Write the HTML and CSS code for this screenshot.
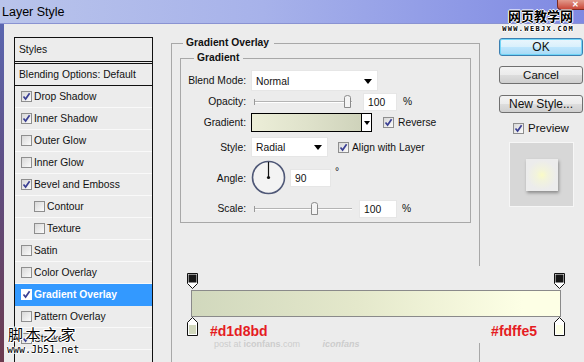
FILE: index.html
```html
<!DOCTYPE html>
<html>
<head>
<meta charset="utf-8">
<link rel="stylesheet" href="styles.css">
</head>
<body>
<div class="titlebar">
  <span class="title">Layer Style</span>
  <div class="close">&#x2715;</div>
</div>
<div class="content">
  <div class="frame"></div>
  <div class="list">
    <div class="hdr">Styles</div>
    <div class="blend">Blending Options: Default</div>
    <div class="item"><span class="cb"><svg viewBox="0 0 9 9"><path d="M1.5 4.5 L3.6 7 L7.6 1.3"/></svg></span>Drop Shadow</div>
    <div class="item"><span class="cb"><svg viewBox="0 0 9 9"><path d="M1.5 4.5 L3.6 7 L7.6 1.3"/></svg></span>Inner Shadow</div>
    <div class="item"><span class="cb"></span>Outer Glow</div>
    <div class="item"><span class="cb"></span>Inner Glow</div>
    <div class="item"><span class="cb"><svg viewBox="0 0 9 9"><path d="M1.5 4.5 L3.6 7 L7.6 1.3"/></svg></span>Bevel and Emboss</div>
    <div class="item sub"><span class="cb"></span>Contour</div>
    <div class="item sub"><span class="cb"></span>Texture</div>
    <div class="item"><span class="cb"></span>Satin</div>
    <div class="item"><span class="cb"></span>Color Overlay</div>
    <div class="item sel"><span class="cb"><svg viewBox="0 0 9 9"><path d="M1.5 4.5 L3.6 7 L7.6 1.3"/></svg></span>Gradient Overlay</div>
    <div class="item"><span class="cb"></span>Pattern Overlay</div>
    <div class="item"><span class="cb"><svg viewBox="0 0 9 9"><path d="M1.5 4.5 L3.6 7 L7.6 1.3"/></svg></span>Stroke</div>
  </div>
  <div class="main">
    <fieldset class="outer">
      <legend>Gradient Overlay</legend>
      <fieldset class="inner">
        <legend>Gradient</legend>
        <div class="form">
          <div class="lbl">Blend Mode:</div>
          <div class="ctl"><div class="select wide"><span>Normal</span><i class="arrow"></i></div></div>

          <div class="lbl">Opacity:</div>
          <div class="ctl">
            <svg class="slider" width="99" height="16" viewBox="0 0 99 16"><line x1="1" y1="7.5" x2="99" y2="7.5" stroke="#b4b4b4"/><line x1="1" y1="8.5" x2="99" y2="8.5" stroke="#fff"/><line x1="1.5" y1="5" x2="1.5" y2="11" stroke="#9a9a9a"/><path d="M91.5 3.5 Q91.5 1.5 94.5 1.5 Q97.5 1.5 97.5 3.5 V13.5 H91.5 Z" fill="#f4f4f4" stroke="#8a8a8a"/></svg>
            <div class="field op">100</div><span class="unit">%</span>
          </div>

          <div class="lbl">Gradient:</div>
          <div class="ctl">
            <div class="swatch"></div><div class="swdrop"><i class="arrow small"></i></div>
            <span class="cb rev"><svg viewBox="0 0 9 9"><path d="M1.5 4.5 L3.6 7 L7.6 1.3"/></svg></span><span>Reverse</span>
          </div>

          <div class="lbl">Style:</div>
          <div class="ctl">
            <div class="select narrow"><span>Radial</span><i class="arrow"></i></div>
            <span class="cb align"><svg viewBox="0 0 9 9"><path d="M1.5 4.5 L3.6 7 L7.6 1.3"/></svg></span><span>Align with Layer</span>
          </div>

          <div class="lbl">Angle:</div>
          <div class="ctl">
            <svg class="dial" width="36" height="36" viewBox="0 0 36 36"><circle cx="17.5" cy="17.5" r="16" fill="#f3f3f3" stroke="#4f5877" stroke-width="1.6"/><line x1="17.5" y1="2" x2="17.5" y2="17.5" stroke="#111" stroke-width="1.2"/><circle cx="17.5" cy="17.5" r="1.6" fill="#111"/></svg>
            <div class="field ang">90</div><span class="deg">&#176;</span>
          </div>

          <div class="lbl">Scale:</div>
          <div class="ctl">
            <svg class="slider" width="99" height="16" viewBox="0 0 99 16"><line x1="1" y1="7.5" x2="99" y2="7.5" stroke="#b4b4b4"/><line x1="1" y1="8.5" x2="99" y2="8.5" stroke="#fff"/><line x1="1.5" y1="5" x2="1.5" y2="11" stroke="#9a9a9a"/><path d="M58.5 3.5 Q58.5 1.5 61.5 1.5 Q64.5 1.5 64.5 3.5 V13.5 H58.5 Z" fill="#f4f4f4" stroke="#8a8a8a"/></svg>
            <div class="field sc">100</div><span class="unit sc">%</span>
          </div>
        </div>
      </fieldset>
    </fieldset>
  </div>
  <div class="side">
    <div class="btn ok">OK</div>
    <div class="btn cancel">Cancel</div>
    <div class="btn newstyle">New Style...</div>
    <div class="prev"><span class="cb"><svg viewBox="0 0 9 9"><path d="M1.5 4.5 L3.6 7 L7.6 1.3"/></svg></span><span>Preview</span></div>
    <div class="thumb"><div class="thumb-in"></div></div>
  </div>
</div>

<div class="editor">
  <div class="stops top">
    <svg width="11" height="16" viewBox="0 0 11 16"><path d="M0.5 0.5 H10.5 V10.5 L5.5 15.5 L0.5 10.5 Z" fill="#fff" stroke="#111"/><rect x="1.5" y="1.5" width="8" height="8" fill="#161616"/></svg>
    <svg width="11" height="16" viewBox="0 0 11 16"><path d="M0.5 0.5 H10.5 V10.5 L5.5 15.5 L0.5 10.5 Z" fill="#fff" stroke="#111"/><rect x="1.5" y="1.5" width="8" height="8" fill="#161616"/></svg>
  </div>
  <div class="bar"></div>
  <div class="stops bottom">
    <svg width="11" height="19" viewBox="0 0 11 19"><path d="M5.5 0.5 L10.5 5.5 V18.5 H0.5 V5.5 Z" fill="#fff" stroke="#111"/><rect x="2" y="8" width="7" height="9" fill="#d1d8bd"/></svg>
    <span class="hex left">#d1d8bd</span>
    <span class="hex right">#fdffe5</span>
    <svg width="11" height="19" viewBox="0 0 11 19"><path d="M5.5 0.5 L10.5 5.5 V18.5 H0.5 V5.5 Z" fill="#fff" stroke="#111"/><rect x="2" y="8" width="7" height="9" fill="#fdffe5"/></svg>
  </div>
  <div class="credit">post at <b>iconfans</b>.com <i>iconfans</i></div>
</div>

<div class="wm-top"><div class="cn">网页教学网</div><div class="en">WWW.WEBJX.COM</div></div>
<div class="wm-bottom"><div class="cn">脚本之家</div><div class="en">www.Jb51.net</div></div>
</body>
</html>
```
FILE: styles.css
```css
html, body {
  margin: 0;
  padding: 0;
}
body {
  width: 584px;
  height: 362px;
  overflow: hidden;
  position: relative;
  background: #ececec;
  font-family: "Liberation Sans", Arial, sans-serif;
  font-size: 10.3px;
  color: #111;
}
.titlebar {
  height: 23px;
  border-bottom: 1px solid #8a93d2;
  background: linear-gradient(to right, #b9c4eb 0%, #a7b2ea 45%, #8d98e6 80%, #7f89e2 100%);
  display: flex;
  justify-content: space-between;
  align-items: center;
}
.title {
  margin-left: 2px;
  font-size: 12.5px;
  color: #000;
}
.close {
  align-self: flex-start;
  width: 27px;
  height: 10px;
  box-sizing: border-box;
  border: 1px solid #7a2a22;
  border-top: none;
  border-right: none;
  border-radius: 0 0 0 4px;
  background: linear-gradient(#e29a8c, #c9483a);
  color: #fff;
  font-size: 8px;
  font-weight: bold;
  line-height: 9px;
  text-align: center;
  padding-left: 9px;
}
.content {
  display: flex;
  height: 338px;
}
.frame {
  width: 4px;
  background: linear-gradient(#5b67b0, #5e4f86 40%, #6b3a4e);
}
.list {
  margin-left: 10px;
  margin-top: 13px;
  width: 139px;
  box-sizing: border-box;
  border: 1px solid #111;
  border-bottom: none;
  overflow: hidden;
}
.hdr {
  height: 23px;
  line-height: 23px;
  padding-left: 4px;
  border-bottom: 1px solid #111;
}
.blend {
  margin-top: 1px;
  height: 21px;
  line-height: 21px;
  padding-left: 4px;
  border-top: 1px solid #111;
  border-bottom: 1px solid #111;
}
.item {
  height: 21px;
  border-bottom: 1px solid #f9f9f9;
  display: flex;
  align-items: center;
  padding-left: 6px;
  gap: 2px;
}
.item.sub {
  padding-left: 19px;
}
.item.sel {
  background: #3399ff;
  color: #fff;
  font-weight: bold;
  border-bottom-color: #3399ff;
}
.cb {
  display: inline-block;
  flex: none;
  width: 11px;
  height: 11px;
  box-sizing: border-box;
  border: 1px solid #8e8e8e;
  background: linear-gradient(135deg, #d8d8d8, #fbfbfb);
}
.cb svg {
  display: block;
  width: 9px;
  height: 9px;
}
.cb path {
  fill: none;
  stroke: #3a3f93;
  stroke-width: 1.7;
}
.item.sel .cb {
  background: #fff;
  border-color: #fff;
}
.main {
  margin-left: 18px;
  width: 309px;
  overflow: hidden;
}
fieldset {
  margin: 0;
  border: 1px solid #a8a8a8;
  min-width: 0;
}
legend {
  font-weight: bold;
  line-height: 14px;
}
.outer {
  margin-top: 12px;
  padding: 0 8px;
  height: 340px;
  box-sizing: border-box;
}
.outer > legend {
  margin-left: 3px;
  padding: 0 5px 0 3px;
}
.inner {
  padding: 0;
  margin-top: 1px;
}
.inner > legend {
  margin-left: 13px;
  padding: 0 4px 0 3px;
}
.form {
  display: grid;
  grid-template-columns: 65px 1fr;
  column-gap: 5px;
  grid-template-rows: 21px 21px 21px 28px 34px 27px;
  margin-top: 5px;
}
.lbl {
  text-align: right;
  align-self: center;
}
.ctl {
  display: flex;
  align-items: center;
}
.select {
  height: 21px;
  box-sizing: border-box;
  background: #fff;
  border: 1px solid #e6e6e6;
  display: flex;
  align-items: center;
  justify-content: space-between;
  padding: 1px 5px 0 4px;
}
.select.wide {
  width: 127px;
}
.select.narrow {
  width: 77px;
  height: 20px;
}
.arrow {
  width: 0;
  height: 0;
  border-left: 4px solid transparent;
  border-right: 4px solid transparent;
  border-top: 5px solid #000;
}
.arrow.small {
  border-left-width: 3px;
  border-right-width: 3px;
  border-top-width: 4px;
}
.slider {
  display: block;
  margin-left: 2px;
}
.field {
  height: 18px;
  box-sizing: border-box;
  background: #fff;
  border: 1px solid #e6e6e6;
  padding-left: 4px;
  line-height: 17px;
}
.field.op {
  width: 34px;
  margin-left: 11px;
}
.field.sc {
  width: 38px;
  margin-left: 7px;
}
.field.ang {
  width: 41px;
  margin-left: 3px;
}
.unit {
  margin-left: 6px;
}
.unit.sc {
  margin-left: 5px;
}
.deg {
  align-self: flex-start;
  margin-left: 4px;
  margin-top: 5px;
}
.dial {
  display: block;
}
.swatch {
  width: 111px;
  height: 19px;
  box-sizing: border-box;
  border: 1px solid #000;
  background: linear-gradient(to right, #eceed8, #dfe2cb 50%, #cfd3bb);
}
.swdrop {
  width: 10px;
  height: 19px;
  box-sizing: border-box;
  border: 1px solid #000;
  border-left: none;
  background: #fff;
  display: flex;
  align-items: center;
  justify-content: center;
}
.cb.rev {
  margin-left: 11px;
  margin-right: 4px;
}
.cb.align {
  margin-left: 10px;
  margin-right: 3px;
}
.side {
  margin-left: 19px;
  width: 85px;
}
.btn {
  width: 84px;
  height: 18px;
  box-sizing: border-box;
  border: 1px solid #707070;
  border-radius: 3px;
  background: linear-gradient(#f3f3f3 0%, #ebebeb 50%, #dddddd 51%, #cfcfcf 100%);
  font-size: 11.5px;
  display: flex;
  align-items: center;
  justify-content: center;
  color: #111;
}
.btn.ok {
  margin-top: 14px;
  border: 1px solid #3c7fb1;
  box-shadow: inset 0 0 0 1px #71d5f7;
  background: linear-gradient(#eaf6fd 0%, #d9f0fc 50%, #bee6fd 51%, #a7d9f5 100%);
  font-size: 12px;
}
.btn.cancel {
  margin-top: 10px;
}
.btn.newstyle {
  margin-top: 11px;
  font-size: 12px;
}
.prev {
  margin-top: 9px;
  padding-left: 14px;
  display: flex;
  align-items: center;
  gap: 4px;
  height: 12px;
  font-size: 11.5px;
}
.thumb {
  margin-top: 8px;
  margin-left: 10px;
  width: 65px;
  height: 65px;
  box-sizing: border-box;
  border: 1px solid #f6f6f6;
  background: #d7d7d7;
  display: flex;
  align-items: center;
  justify-content: center;
}
.thumb-in {
  width: 32px;
  height: 32px;
  background: radial-gradient(circle at 50% 50%, #fafbc6 0, #f2f3dc 25%, #ececec 65%);
  box-shadow: 1px 2px 3px rgba(0, 0, 0, 0.35);
}
.editor {
  position: absolute;
  left: 175px;
  top: 266px;
  width: 409px;
  height: 77px;
  background: #ececec;
}
.stops {
  display: flex;
  margin-left: 12px;
  width: 378px;
}
.stops svg {
  display: block;
  flex: none;
}
.stops.top {
  margin-top: 7px;
  justify-content: space-between;
}
.bar {
  margin-top: 1px;
  margin-left: 16px;
  width: 370px;
  height: 27px;
  box-sizing: border-box;
  border: 1px solid #8a8a8a;
  background: linear-gradient(to right, #d1d8bd, #e4e8cb 45%, #fdffe5 90%, #fdffe5);
}
.stops.bottom {
  align-items: flex-start;
}
.hex {
  color: #e51c23;
  font-weight: bold;
  font-size: 14px;
  line-height: 14px;
  margin-top: 7px;
}
.hex.left {
  margin-left: 12px;
}
.hex.right {
  margin-left: auto;
  margin-right: 17px;
}
.credit {
  margin-left: 39px;
  margin-top: 2px;
  font-size: 9px;
  line-height: 9px;
  color: #cdcdcd;
}
.credit i {
  margin-left: 20px;
  font-weight: bold;
}
.wm-top {
  position: absolute;
  left: 502px;
  top: 7px;
  width: 72px;
  text-align: right;
}
.wm-top .cn {
  font-family: "Noto Sans CJK SC", sans-serif;
  font-size: 13px;
  line-height: 17px;
  font-weight: bold;
  color: #000;
  text-shadow: 1px 0 #fff, -1px 0 #fff, 0 1px #fff, 0 -1px #fff;
  padding-right: 1px;
}
.wm-top .en {
  font-family: "DejaVu Sans Mono", monospace;
  font-size: 7px;
  line-height: 7px;
  font-weight: bold;
  letter-spacing: 1.3px;
  color: #000;
  text-shadow: 1px 0 #fff, -1px 0 #fff, 0 1px #fff, 0 -1px #fff;
  margin-top: 2px;
}
.wm-bottom {
  position: absolute;
  left: 8px;
  top: 324px;
}
.wm-bottom .cn {
  font-family: "Noto Sans CJK SC", sans-serif;
  font-size: 15px;
  line-height: 20px;
  letter-spacing: 2.5px;
  color: #000;
  text-shadow: 1px 0 #fff, -1px 0 #fff, 0 1px #fff, 0 -1px #fff, 1px 1px #fff, -1px -1px #fff;
}
.wm-bottom .en {
  font-family: "DejaVu Sans Mono", monospace;
  font-size: 10px;
  line-height: 12px;
  color: #000;
  margin-left: -1px;
  text-shadow: 1px 0 #fff, -1px 0 #fff, 0 1px #fff, 0 -1px #fff;
}
```
